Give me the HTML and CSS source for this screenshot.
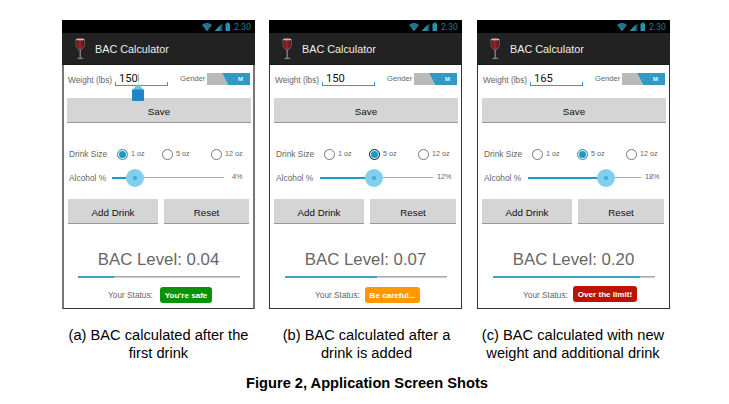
FILE: index.html
```
<!DOCTYPE html>
<html lang="en">
<head>
<meta charset="utf-8">
<title>BAC Calculator</title>
<link rel="stylesheet" href="styles.css">
</head>
<body>
<svg class="defs" aria-hidden="true">
  <defs>
    <linearGradient id="wine" x1="0" x2="1" y1="0" y2="0"><stop offset="0" stop-color="#5e1519"/><stop offset=".5" stop-color="#a01f27"/><stop offset="1" stop-color="#4a1114"/></linearGradient>
    <symbol id="glass" viewBox="0 0 11 22">
      <path d="M1 1.2C.6 6 .8 10.5 5.2 12.2 9.6 10.5 9.8 6 9.3 1.2Z" fill="#655" stroke="#a99" stroke-width=".5"/>
      <path d="M1 2.4C.9 7 1.5 10.3 5.2 11.6 8.8 10.3 9.4 7 9.3 2.4Z" fill="url(#wine)"/>
      <ellipse cx="5.2" cy="1.4" rx="4.2" ry=".8" fill="#c9b8b8"/>
      <path d="M5.2 12v7.6" stroke="#b9adad" stroke-width=".9"/>
      <path d="M1.5 20.5Q5.2 18.3 9 20.5Q5.2 21.4 1.5 20.5Z" fill="#99908f"/>
    </symbol>
    <symbol id="signals" viewBox="0 0 29 10">
      <path d="M0 3.1Q5 -1.3 10 3.1L5 9.2Z" fill="#2d83a3"/>
      <path d="M1.2 4Q5 1 8.8 4M2.7 5.8Q5 4 7.3 5.8" fill="none" stroke="#123f50" stroke-width=".6"/>
      <path d="M12.5 9L20.5 1V9Z" fill="#1b5063"/><path d="M12.5 9L18.5 3V9Z" fill="#3287a5"/>
      <path d="M23.5 1.4h1.2V.5h2.2v.9h1.2V9h-4.6Z" fill="#2e8db5"/>
    </symbol>
  </defs>
</svg>
<main class="figure">
  <div class="screens">
    <figure class="screen first">
      <div class="phone">
        <div class="statusbar"><svg class="signals"><use href="#signals"/></svg><span>2:30</span></div>
        <header class="appbar"><svg class="glass"><use href="#glass"/></svg><h1>BAC Calculator</h1></header>
        <div class="content">
          <div class="weight-row"><label>Weight (lbs)</label><span class="input focused">150<svg class="handle" viewBox="0 0 14 17"><path d="M7 0L13 6H1Z" fill="#68c5e6"/><rect x="1" y="5.5" width="12" height="11.5" rx="1" fill="#2186c4"/></svg></span><span class="gender">Gender</span><span class="toggle"><b>M</b></span></div>
          <div class="button save">Save</div>
          <div class="size-row"><span class="label">Drink Size</span><i class="radio on"></i><span>1 oz</span><i class="radio"></i><span>5 oz</span><i class="radio"></i><span>12 oz</span></div>
          <div class="alcohol-row"><span class="label">Alcohol %</span><div class="slider"><div class="fill" style="width:20.2%"></div></div><span>4%</span></div>
          <div class="actions"><div class="button">Add Drink</div><div class="button">Reset</div></div>
          <h2>BAC Level: 0.04</h2>
          <div class="progress"><div style="width:22%"></div></div>
          <div class="status-row"><span>Your Status:</span><b class="badge safe">You're safe</b></div>
        </div>
      </div>
      <figcaption>(a) BAC calculated after the<br>first drink</figcaption>
    </figure>
    <figure class="screen second">
      <div class="phone">
        <div class="statusbar"><svg class="signals"><use href="#signals"/></svg><span>2:30</span></div>
        <header class="appbar"><svg class="glass"><use href="#glass"/></svg><h1>BAC Calculator</h1></header>
        <div class="content">
          <div class="weight-row"><label>Weight (lbs)</label><span class="input">150</span><span class="gender">Gender</span><span class="toggle"><b>M</b></span></div>
          <div class="button save">Save</div>
          <div class="size-row"><span class="label">Drink Size</span><i class="radio"></i><span>1 oz</span><i class="radio on dark"></i><span>5 oz</span><i class="radio"></i><span>12 oz</span></div>
          <div class="alcohol-row"><span class="label">Alcohol %</span><div class="slider"><div class="fill" style="width:47.5%"></div></div><span>12%</span></div>
          <div class="actions"><div class="button">Add Drink</div><div class="button">Reset</div></div>
          <h2>BAC Level: 0.07</h2>
          <div class="progress"><div style="width:57%"></div></div>
          <div class="status-row"><span>Your Status:</span><b class="badge careful">Be careful...</b></div>
        </div>
      </div>
      <figcaption>(b) BAC calculated after a<br>drink is added</figcaption>
    </figure>
    <figure class="screen third">
      <div class="phone">
        <div class="statusbar"><svg class="signals"><use href="#signals"/></svg><span>2:30</span></div>
        <header class="appbar"><svg class="glass"><use href="#glass"/></svg><h1>BAC Calculator</h1></header>
        <div class="content">
          <div class="weight-row"><label>Weight (lbs)</label><span class="input">165</span><span class="gender">Gender</span><span class="toggle"><b>M</b></span></div>
          <div class="button save">Save</div>
          <div class="size-row"><span class="label">Drink Size</span><i class="radio"></i><span>1 oz</span><i class="radio on"></i><span>5 oz</span><i class="radio"></i><span>12 oz</span></div>
          <div class="alcohol-row"><span class="label">Alcohol %</span><div class="slider"><div class="fill" style="width:69%"></div></div><span>18%</span></div>
          <div class="actions"><div class="button">Add Drink</div><div class="button">Reset</div></div>
          <h2>BAC Level: 0.20</h2>
          <div class="progress"><div style="width:91%"></div></div>
          <div class="status-row"><span>Your Status:</span><b class="badge over">Over the limit!</b></div>
        </div>
      </div>
      <figcaption>(c) BAC calculated with new<br>weight and additional drink</figcaption>
    </figure>
  </div>
  <p class="title">Figure 2, Application Screen Shots</p>
</main>
</body>
</html>
```
FILE: styles.css
```
* { box-sizing: border-box; }
body { margin: 0; background: #fff; font-family: "Liberation Sans", Arial, sans-serif; color: #000; }
.defs { position: absolute; width: 0; height: 0; }
.figure { width: 729px; height: 404px; padding-top: 20px; overflow: hidden; }
.screens { display: grid; grid-template-columns: 207px 208px 193px; padding-left: 62px; }
.screen { margin: 0; width: 193px; }
.phone { height: 289px; display: flex; flex-direction: column; }

.statusbar { height: 13px; background: #000; display: flex; align-items: center; justify-content: flex-end; gap: 3px; padding: 1px 4px 0 0; color: #2b7796; font: 8.8px/13px Roboto, sans-serif; }
.signals { width: 29px; height: 10px; }
.appbar { height: 32px; background: #222; border-bottom: 1px solid #171717; display: flex; align-items: center; padding-left: 13px; gap: 9px; }
.glass { width: 11px; height: 22px; }
.appbar h1 { margin: 0; color: #eee; font: 10.8px/14px "Liberation Sans", sans-serif; }
.content { flex: 1; border: 1px solid #333; border-top: 0; display: flex; flex-direction: column; color: #666; }
.first .content { border-left: 2px solid #777; border-right: 2px solid #777; }
.second .content, .third .content { padding: 0 1px; }

.weight-row { display: flex; height: 33px; padding: 8px 0 0 4px; font-size: 8.3px; white-space: nowrap; }
.weight-row label { width: 47px; line-height: 14px; }
.input { position: relative; width: 53px; height: 13px; padding-left: 4px; border-bottom: 1px solid #2e9dcb; color: #111; font: 11.2px/11px Roboto, sans-serif; }
.input::before, .input::after { content: ""; position: absolute; bottom: 0; width: 1px; height: 3px; background: #2e9dcb; }
.input::before { left: 0; }
.input::after { right: 0; }
.focused::before { box-shadow: 23px -3px #aaa, 23px -6px #aaa, 23px -8px #aaa; }
.handle { position: absolute; left: 16px; top: 11px; width: 14px; height: 17px; z-index: 1; }
.gender { width: 39px; padding-left: 12px; font-size: 7.6px; line-height: 12px; }
.toggle { width: 43px; height: 12px; background: linear-gradient(63deg, #b9b9b9 43%, #3299c4 44%); color: #e8faff; display: flex; }
.toggle b { margin: auto 7px auto auto; font-size: 6px; }

.button { height: 25px; background: #d5d5d5; border-bottom: 1px solid #999; color: #111; display: flex; align-items: center; justify-content: center; padding-top: 2px; font-size: 9.8px; line-height: 11px; }
.save { margin: 0 2px 0 3px; flex: none; }
.size-row { margin-top: 23px; height: 16px; display: grid; grid-template-columns: 47.5px 11px 34px 11px 38px 11px 26px; align-items: center; padding-left: 5px; font-size: 7.2px; line-height: 12px; white-space: nowrap; }
.size-row > span:not(.label) { padding-left: 3.5px; }
.label { font-size: 8.4px; }
.radio { width: 11px; height: 11px; border: 1px solid #777; border-radius: 50%; }
.radio.on { background: #2097cb; border-color: #5593aa; box-shadow: inset 0 0 0 1px #fff; }
.radio.dark { border-color: #222; }
.alcohol-row { height: 30px; display: flex; align-items: center; padding-left: 5px; font-size: 7.3px; }
.alcohol-row .label { width: 43px; padding-top: 2px; }
.slider { width: 112px; height: 1px; background: #aaa; }
.slider + span { margin: -1px 0 0 8px; }
.fill { position: relative; height: 2px; background: #2198c8; }
.fill::after { content: ""; position: absolute; right: -9px; top: -8px; width: 18px; height: 18px; border-radius: 50%; background: radial-gradient(circle, #3fabd4 0 1.5px, #80cfec 2.5px); }
.second .slider, .third .slider { width: 113px; margin-left: 1px; }
.second .slider + span, .third .slider + span { margin-left: 4px; }
.actions { margin: 7px 0 0 4px; display: grid; grid-template-columns: 90px 85px; gap: 6px; }
.second .actions, .third .actions { margin-left: 3px; grid-template-columns: 90px 86px; }
.content h2 { margin: 26px 0 0; text-align: center; font-weight: 400; font-size: 16.8px; line-height: 20px; letter-spacing: .02px; }
.progress { width: 162px; height: 2px; margin: 6px 0 0 14px; background: linear-gradient(#aaa 50%, #ccc 50%); }
.progress div { height: 2px; background: #38a3c9; }
.status-row { margin-top: 9px; height: 16px; display: flex; align-items: center; padding-left: 44px; font-size: 8.3px; white-space: nowrap; }
.status-row > span { width: 52px; }
.badge { height: 16px; border-radius: 3px; color: #fff; font-size: 8.1px; line-height: 17px; text-align: center; }
.safe { width: 52px; background: #079207; }
.careful { width: 55px; margin-left: -2px; background: #ff9800; }
.over { width: 64px; margin: -2px 0 0 -2px; background: #b91400; }

figcaption { margin: 17px -10px 0; text-align: center; font-size: 14.65px; line-height: 18px; white-space: nowrap; }
.second figcaption { margin-left: -7px; margin-right: -9px; }
.third figcaption { margin-left: -10px; margin-right: -9px; }
.title { margin: 12px 0 0 5px; text-align: center; font-size: 14.65px; line-height: 18px; font-weight: 700; }
```
